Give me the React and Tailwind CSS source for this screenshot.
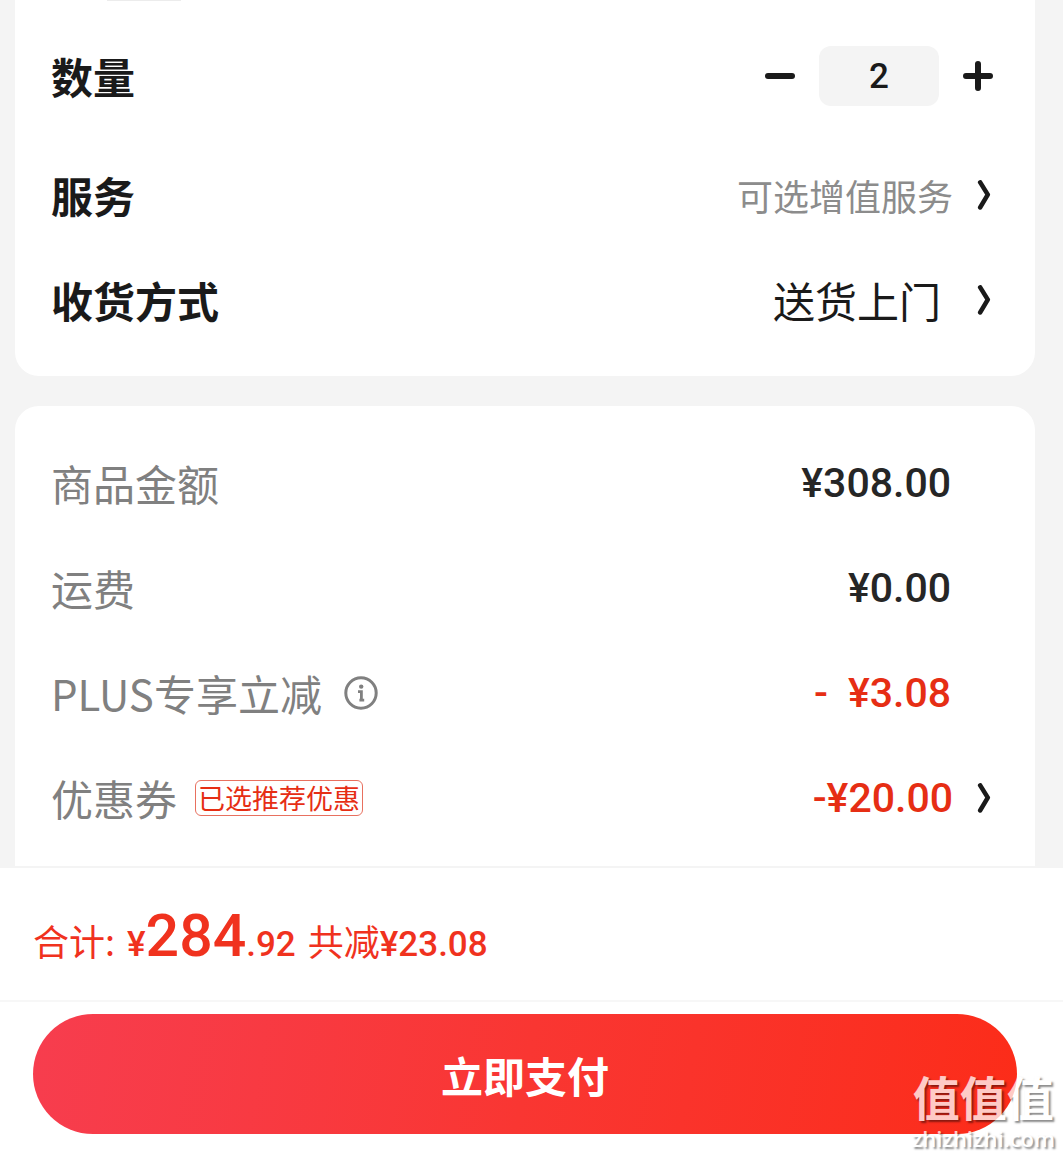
import React, { useState } from "react";

const ChevronIcon = () => (
    <svg
        className="h-[30px] w-3.5 shrink-0"
        viewBox="0 0 14 30"
        fill="none"
        stroke="currentColor"
        strokeWidth="4.6"
        strokeLinecap="round"
        strokeLinejoin="round"
        aria-hidden="true"
    >
        <path d="M3.2 2.4 L10.8 14.6 L3.2 27.4" />
    </svg>
);

const InfoIcon = () => (
    <svg
        className="size-[34px]"
        viewBox="0 0 34 34"
        fill="none"
        stroke="currentColor"
        aria-hidden="true"
    >
        <circle cx="17" cy="17" r="15.2" strokeWidth="3" />
        <circle cx="17.2" cy="10.6" r="2.2" fill="currentColor" stroke="none" />
        <path d="M14 15.6 H17.4 V24 M15.4 24.2 H20.2" strokeWidth="2.8" />
    </svg>
);

// Wiersz z etykietą po lewej i wartością po prawej
const Row = ({ label, children }) => (
    <div className="flex h-[105px] items-center justify-between pl-9 pr-11">
        <div className="flex items-center">{label}</div>
        {children}
    </div>
);

const App = () => {
    const [quantity, setQuantity] = useState(2);

    return (
        <div className="relative flex min-h-screen flex-col overflow-hidden bg-[#f4f4f4] font-['Noto_Sans_CJK_SC',sans-serif] text-[#1a1a1a]">
            <main className="flex flex-col gap-[30px] pl-[15px] pr-7">
                <section className="rounded-b-3xl bg-white pb-6">
                    <div className="ml-23 h-px w-[74px] bg-[#ececec]" />
                    <div className="flex h-[141px] items-center justify-between pl-9 pr-[42px] pt-2">
                        <label
                            htmlFor="quantity"
                            className="text-[42px] leading-[60px] font-bold"
                        >
                            数量
                        </label>
                        <div className="flex items-center gap-6">
                            <button
                                type="button"
                                aria-label="减少"
                                onClick={() =>
                                    setQuantity(Math.max(1, quantity - 1))
                                }
                            >
                                <svg
                                    className="size-[30px]"
                                    viewBox="0 0 30 30"
                                    stroke="currentColor"
                                    strokeWidth="6"
                                    strokeLinecap="round"
                                >
                                    <path d="M3 15H27" />
                                </svg>
                            </button>
                            <input
                                id="quantity"
                                type="text"
                                inputMode="numeric"
                                value={quantity}
                                onChange={(e) =>
                                    setQuantity(Number(e.target.value) || 1)
                                }
                                className="h-[60px] w-30 rounded-xl bg-[#f4f4f4] pt-0.5 text-center font-[Roboto,sans-serif] text-[35px] font-medium"
                            />
                            <button
                                type="button"
                                aria-label="增加"
                                onClick={() => setQuantity(quantity + 1)}
                            >
                                <svg
                                    className="size-[30px]"
                                    viewBox="0 0 30 30"
                                    stroke="currentColor"
                                    strokeWidth="6"
                                    strokeLinecap="round"
                                >
                                    <path d="M3 15H27M15 3V27" />
                                </svg>
                            </button>
                        </div>
                    </div>
                    <Row
                        label={
                            <span className="text-[42px] leading-[60px] font-bold">
                                服务
                            </span>
                        }
                    >
                        <button type="button" className="flex items-center gap-6">
                            <span className="text-[36px] leading-[60px] text-[#8c8c8c]">
                                可选增值服务
                            </span>
                            <ChevronIcon />
                        </button>
                    </Row>
                    <Row
                        label={
                            <span className="text-[42px] leading-[60px] font-bold">
                                收货方式
                            </span>
                        }
                    >
                        <button type="button" className="flex items-center gap-9">
                            <span className="text-[42px] leading-[60px]">
                                送货上门
                            </span>
                            <ChevronIcon />
                        </button>
                    </Row>
                </section>

                <section className="rounded-t-3xl bg-white pt-6 pb-4 text-[42px] leading-[60px] text-[#808080]">
                    <Row label="商品金额">
                        <span className="pr-10 font-[Roboto,sans-serif] text-[41px] font-medium text-[#262626]">
                            ¥308.00
                        </span>
                    </Row>
                    <Row label="运费">
                        <span className="pr-10 font-[Roboto,sans-serif] text-[41px] font-medium text-[#262626]">
                            ¥0.00
                        </span>
                    </Row>
                    <Row
                        label={
                            <>
                                PLUS专享立减
                                <button
                                    type="button"
                                    aria-label="说明"
                                    className="ml-[22px]"
                                >
                                    <InfoIcon />
                                </button>
                            </>
                        }
                    >
                        <span className="flex gap-5 pr-10 font-[Roboto,sans-serif] text-[41px] font-medium text-[#e62e14]">
                            <span>-</span>
                            <span>¥3.08</span>
                        </span>
                    </Row>
                    <Row
                        label={
                            <>
                                优惠券
                                <span className="ml-[18px] rounded-md border border-[#e8705f] px-0.5 text-[27px] leading-[34px] text-[#e62e14]">
                                    已选推荐优惠
                                </span>
                            </>
                        }
                    >
                        <button
                            type="button"
                            className="flex items-center gap-6 text-[#1a1a1a]"
                        >
                            <span className="font-[Roboto,sans-serif] text-[41px] font-medium text-[#e62e14]">
                                -¥20.00
                            </span>
                            <ChevronIcon />
                        </button>
                    </Row>
                </section>
            </main>

            <footer className="flex-1 border-t-2 border-[#f4f4f4] bg-white">
                <div className="flex h-[132px] items-baseline pt-6 pl-[33px] text-[36px] leading-[88px] text-[#f0321e]">
                    <span>合计:</span>
                    <span className="ml-3 font-[Roboto,sans-serif] text-[35px] font-medium">
                        ¥<span className="text-[59px]">284</span>.92
                    </span>
                    <span className="ml-3">共减</span>
                    <span className="font-[Roboto,sans-serif] text-[35px] font-medium">
                        ¥23.08
                    </span>
                </div>
                <div className="border-t-2 border-[#f7f7f7] pt-3 pr-[46px] pl-[33px]">
                    <button
                        type="button"
                        className="h-[120px] w-full rounded-full bg-linear-100 from-[#f73d4e] via-[#f93632] to-[#fc2c18] text-[42px] font-bold text-white"
                    >
                        立即支付
                    </button>
                </div>
            </footer>

            {/* Znak wodny w prawym dolnym rogu */}
            <div className="pointer-events-none absolute right-2 bottom-1 flex flex-col items-center font-['Liberation_Sans','Noto_Sans_CJK_SC',sans-serif] text-white opacity-75 [text-shadow:2px_2px_2px_rgb(0_0_0/0.6)]">
                <span className="text-[47px] leading-[46px] font-bold">
                    值值值
                </span>
                <span className="font-['Open_Sans',sans-serif] text-[22px] leading-[30px] font-semibold">
                    zhizhizhi.com
                </span>
            </div>
        </div>
    );
};

export default App;
